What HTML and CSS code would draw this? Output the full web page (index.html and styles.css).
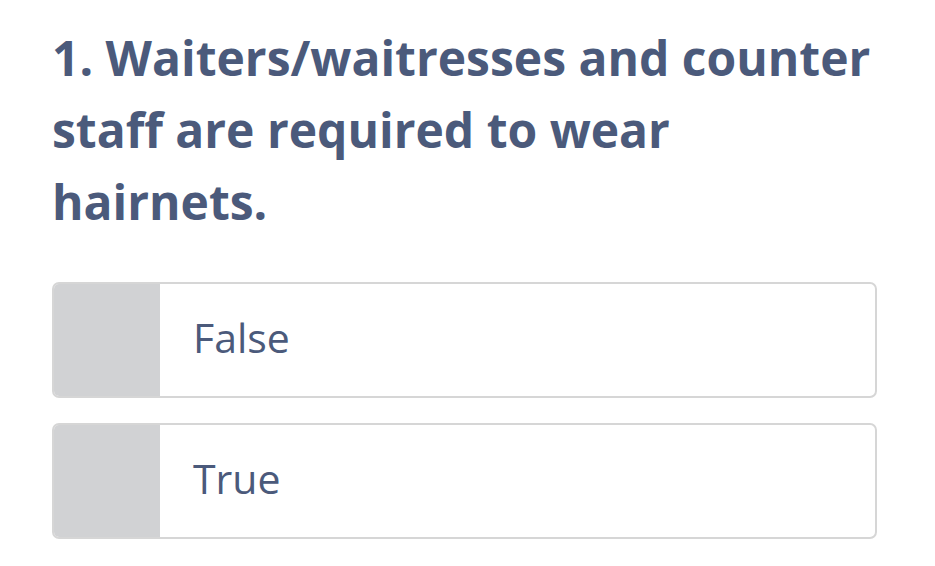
FILE: index.html
```html
<!DOCTYPE html>
<html lang="en">
<head>
  <meta charset="UTF-8">
  <title>Question 1</title>
  <link rel="stylesheet" href="styles.css">
</head>
<body>
  <div class="question">
    <h2 class="question-title">1. Waiters/waitresses and counter staff are required to wear hairnets.</h2>

    <div class="answers">
      <div class="answer">
        <div class="answer-mark"></div>
        <div class="answer-text">False</div>
      </div>
      <div class="answer">
        <div class="answer-mark"></div>
        <div class="answer-text">True</div>
      </div>
    </div>
  </div>
</body>
</html>
```

FILE: styles.css
```css
body {
  margin: 0;
  background: #fff;
  font-family: "Open Sans", sans-serif;
  color: #4b5a7b;
}

.question {
  padding: 22px 58px 0 52px;
}

.question-title {
  margin: 0;
  font-size: 48px;
  font-weight: 700;
  line-height: 72px;
  color: #4b5a7b;
}

.answers {
  display: flex;
  flex-direction: column;
  gap: 25px;
  margin-top: 44px;
}

.answer {
  display: flex;
  height: 112px;
  border: 2px solid #d6d6d6;
  border-radius: 7px;
  overflow: hidden;
}

.answer-mark {
  width: 106px;
  background: #d1d2d4;
}

.answer-text {
  display: flex;
  align-items: center;
  padding: 0 0 6px 33px;
  font-size: 41px;
  color: #4b5a7b;
}
```
